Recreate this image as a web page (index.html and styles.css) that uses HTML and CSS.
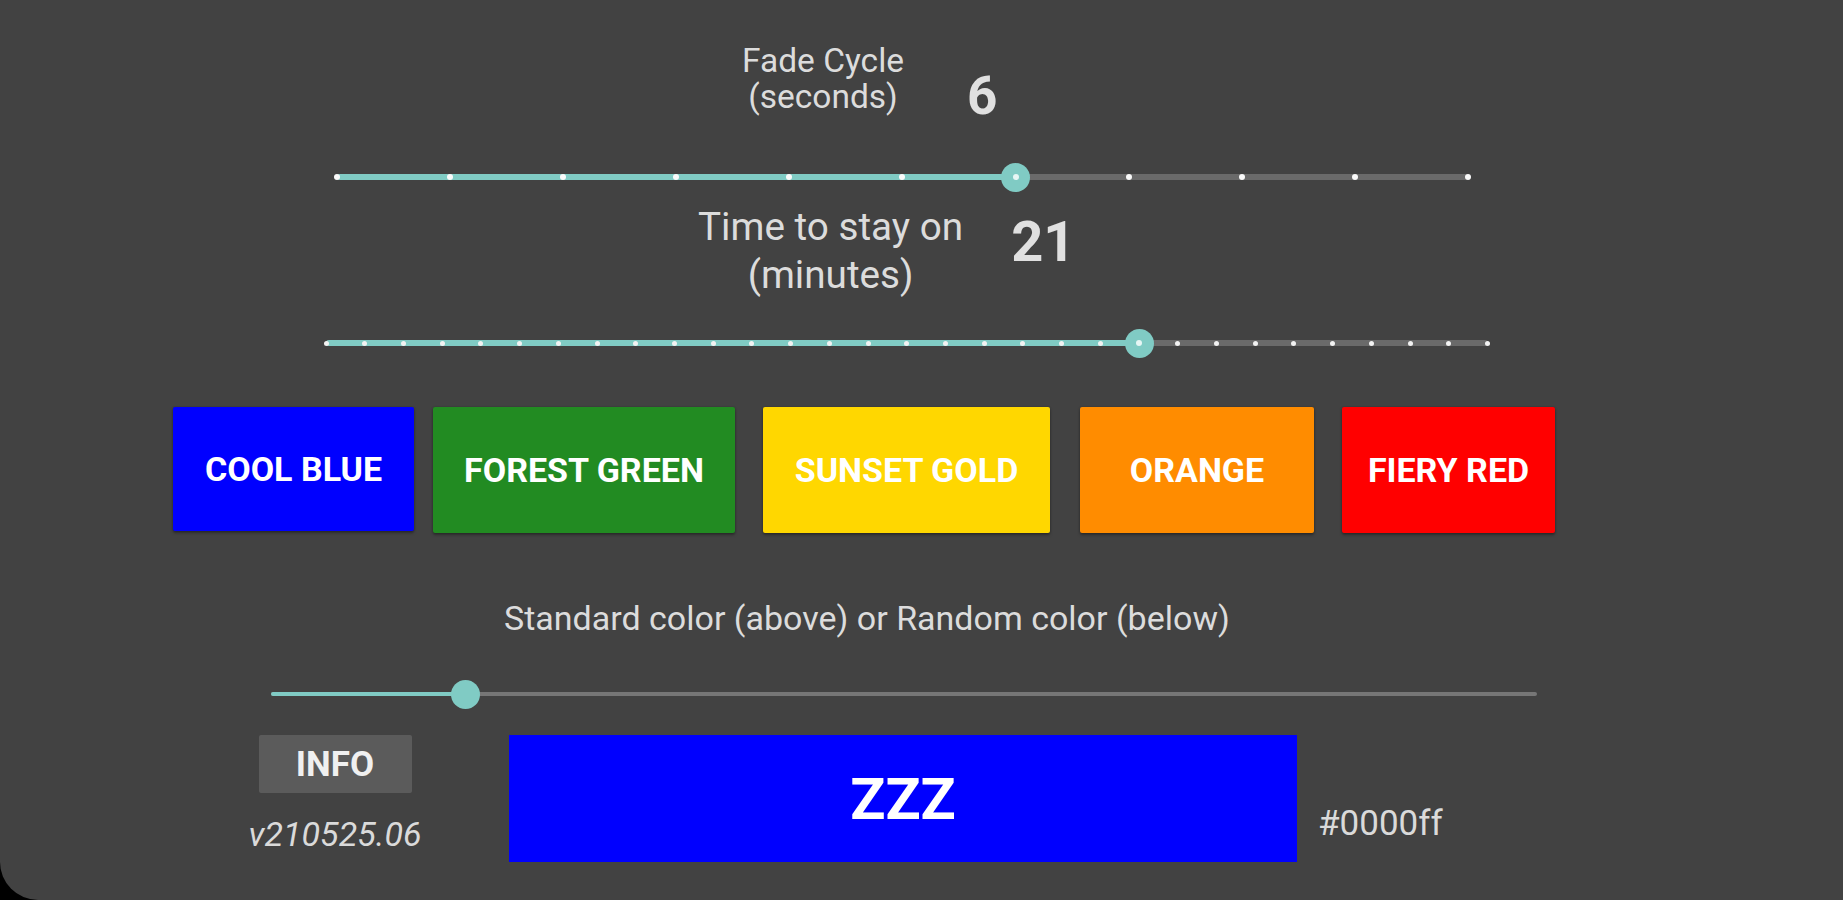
FILE: index.html
```html
<!DOCTYPE html>
<html lang="en">
<head>
<meta charset="utf-8">
<title>Light Controller</title>
<link rel="stylesheet" href="styles.css">
</head>
<body>
<div class="screen">
  <div class="field field-fade">
    <div class="label label-fade">Fade Cycle<br>(seconds)</div>
    <div class="value value-fade">6</div>
  </div>
  <div class="slider slider-fade">
    <div class="track"><div class="active" style="width:60%"></div></div>
    <div class="ticks ticks-big">
      <span></span><span></span><span></span><span></span><span></span><span></span><span></span><span></span><span></span><span></span><span></span>
    </div>
    <div class="thumb thumb-dot" style="left:60%"></div>
  </div>

  <div class="field field-time">
    <div class="label label-time">Time to stay on<br>(minutes)</div>
    <div class="value value-time">21</div>
  </div>
  <div class="slider slider-time">
    <div class="track"><div class="active" style="width:70%"></div></div>
    <div class="ticks ticks-small">
      <span></span><span></span><span></span><span></span><span></span><span></span><span></span><span></span><span></span><span></span><span></span><span></span><span></span><span></span><span></span><span></span><span></span><span></span><span></span><span></span><span></span><span></span><span></span><span></span><span></span><span></span><span></span><span></span><span></span><span></span><span></span>
    </div>
    <div class="thumb thumb-dot" style="left:70%"></div>
  </div>

  <div class="colors">
    <button class="cbtn c-blue">COOL BLUE</button>
    <button class="cbtn c-green">FOREST GREEN</button>
    <button class="cbtn c-gold">SUNSET GOLD</button>
    <button class="cbtn c-orange">ORANGE</button>
    <button class="cbtn c-red">FIERY RED</button>
  </div>

  <div class="mode-label">Standard color (above) or Random color (below)</div>
  <div class="slider slider-mode">
    <div class="track track-thin"><div class="active" style="width:15.4%"></div></div>
    <div class="thumb" style="left:15.4%"></div>
  </div>

  <div class="bottom">
    <div class="info-col">
      <button class="info-btn">INFO</button>
      <div class="version">v210525.06</div>
    </div>
    <div class="swatch">ZZZ</div>
    <div class="hex">#0000ff</div>
  </div>
</div>
</body>
</html>
```
FILE: styles.css
```css
html, body {
  margin: 0;
  padding: 0;
  background: #000;
}

.screen {
  width: 1843px;
  height: 900px;
  background: #424242;
  border-bottom-left-radius: 38px;
  overflow: hidden;
  font-family: Roboto, "Noto Sans", "Liberation Sans", sans-serif;
  color: #dcdcdc;
}

/* value headers */
.field {
  display: flex;
  align-items: flex-start;
}
.label {
  text-align: center;
}
.value {
  font-weight: 700;
  line-height: 1;
  color: #e0e0e0;
}

.field-fade {
  margin-left: 742px;
  padding-top: 43px;
  gap: 63px;
}
.label-fade {
  font-size: 33.5px;
  line-height: 36px;
}
.value-fade {
  font-size: 53px;
  margin-top: 27px;
}

.field-time {
  margin-left: 698px;
  margin-top: 6px;
  gap: 48px;
}
.label-time {
  font-size: 38.7px;
  line-height: 48px;
}
.value-time {
  font-size: 56px;
  margin-top: 11px;
}

/* sliders */
.slider {
  position: relative;
  height: 40px;
}
.slider-fade {
  margin-left: 337px;
  width: 1131px;
  margin-top: 34px;
}
.slider-time {
  margin-left: 326px;
  width: 1162px;
  margin-top: 24px;
}
.slider-mode {
  margin-left: 271px;
  width: 1266px;
  margin-top: 38px;
}

.track {
  position: absolute;
  left: 0;
  right: 0;
  top: 50%;
  height: 6px;
  margin-top: -3px;
  background: #6a6a6a;
  border-radius: 3px;
  overflow: hidden;
}
.track-thin {
  height: 4px;
  margin-top: -2px;
  background: #767676;
}
.active {
  height: 100%;
  background: #80cbc4;
}

.ticks {
  position: absolute;
  top: 50%;
  display: flex;
  justify-content: space-between;
}
.ticks-big {
  left: -3px;
  right: -3px;
  height: 6px;
  margin-top: -3px;
}
.ticks-big span {
  width: 6px;
  height: 6px;
  border-radius: 50%;
  background: #fafafa;
}
.ticks-small {
  left: -2.5px;
  right: -2.5px;
  height: 5px;
  margin-top: -2.5px;
}
.ticks-small span {
  width: 5px;
  height: 5px;
  border-radius: 50%;
  background: #f2f2f2;
}

.thumb {
  position: absolute;
  top: 50%;
  width: 29px;
  height: 29px;
  margin: -14.5px 0 0 -14.5px;
  border-radius: 50%;
  background: #80cbc4;
}
.thumb-dot::after {
  content: "";
  position: absolute;
  left: 11.5px;
  top: 11.5px;
  width: 6px;
  height: 6px;
  border-radius: 50%;
  background: #e6f6f4;
}

/* color buttons */
.colors {
  display: flex;
  margin-left: 173px;
  margin-top: 44px;
  gap: 28px;
}
.cbtn {
  height: 126px;
  border: 0;
  border-radius: 2px;
  padding: 0;
  font-family: Roboto, "Noto Sans", "Liberation Sans", sans-serif;
  font-size: 34px;
  font-weight: 700;
  color: #fff;
  box-shadow: 0 2px 3px rgba(0, 0, 0, 0.35), 0 0 2px rgba(0, 0, 0, 0.2);
}
.c-blue {
  width: 241px;
  height: 124px;
  background: #0000ff;
  margin-right: -9px;
}
.c-green {
  width: 302px;
  background: #228b22;
}
.c-gold {
  width: 287px;
  background: #ffd700;
}
.c-orange {
  width: 234px;
  margin-left: 2px;
  background: #ff8c00;
}
.c-red {
  width: 213px;
  background: #ff0000;
}

/* mode */
.mode-label {
  margin-left: 504px;
  margin-top: 67px;
  font-size: 34px;
  line-height: 36px;
}

/* bottom row */
.bottom {
  display: flex;
  align-items: flex-start;
  margin-left: 248px;
  margin-top: 21px;
}
.info-col {
  width: 174px;
  display: flex;
  flex-direction: column;
  align-items: center;
}
.info-btn {
  width: 153px;
  height: 58px;
  border: 0;
  border-radius: 2px;
  padding: 0;
  background: #5b5b5b;
  color: #f0f0f0;
  font-family: Roboto, "Noto Sans", "Liberation Sans", sans-serif;
  font-size: 35px;
  font-weight: 700;
}
.version {
  margin-top: 23px;
  font-size: 34px;
  line-height: 36px;
  font-style: italic;
  color: #dadada;
  white-space: nowrap;
}
.swatch {
  margin-left: 87px;
  width: 788px;
  height: 127px;
  background: #0000ff;
  display: flex;
  align-items: center;
  justify-content: center;
  color: #fff;
  font-size: 58px;
  font-weight: 700;
}
.hex {
  align-self: flex-end;
  margin-left: 21px;
  margin-bottom: 20px;
  font-size: 35px;
  line-height: 36px;
  color: #dadada;
}
```
